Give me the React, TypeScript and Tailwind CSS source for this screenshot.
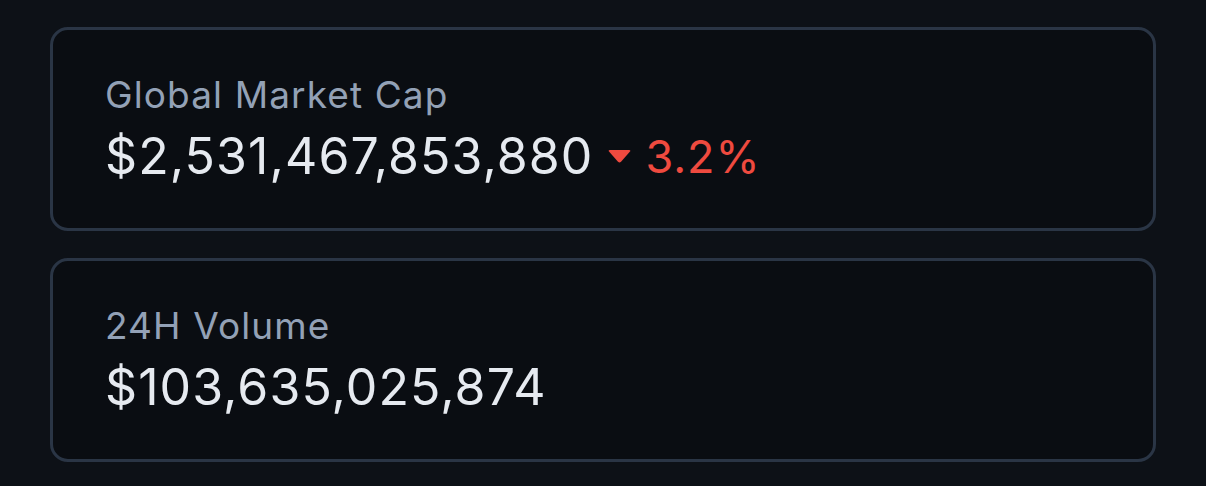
type Stat = {
  label: string;
  value: string;
  change?: number;
};

const stats: Stat[] = [
  { label: 'Global Market Cap', value: '$2,531,467,853,880', change: -3.2 },
  { label: '24H Volume', value: '$103,635,025,874' },
];

function StatCard({ label, value, change }: Stat) {
  return (
    <div className="rounded-[18px] border-[3px] border-[#2a3545] bg-[#0a0d12] px-[52px] pt-[45px] pb-[43px]">
      <div className="text-[37px] leading-[40px] tracking-[0.03em] text-[#93a1b6] mb-[13px]">{label}</div>
      <div className="flex items-center">
        <span className="text-[50px] leading-[57px] tracking-[0.022em] text-[#e6eaf0]">{value}</span>
        {change !== undefined && (
          <span className="ml-[14px] flex items-center text-[45px] leading-[57px] tracking-[0.02em] text-[#ef4a3f]">
            <svg width="23" height="13" viewBox="0 0 23 13" className="mr-[15px]">
              <path d="M1 1.6 Q0 0 2 0 H21 Q23 0 22 1.6 L13 11.8 Q11.5 13.2 10 11.8 Z" fill="#ef4a3f" />
            </svg>
            {Math.abs(change).toFixed(1)}%
          </span>
        )}
      </div>
    </div>
  );
}

export default function App() {
  return (
    <div
      className="min-h-[486px] w-full bg-[#0d1117] px-[50px] pt-[27px] flex flex-col gap-[27px]"
      style={{ fontFamily: 'Inter, "Noto Sans", sans-serif' }}
    >
      {stats.map((s) => (
        <StatCard key={s.label} {...s} />
      ))}
    </div>
  );
}
